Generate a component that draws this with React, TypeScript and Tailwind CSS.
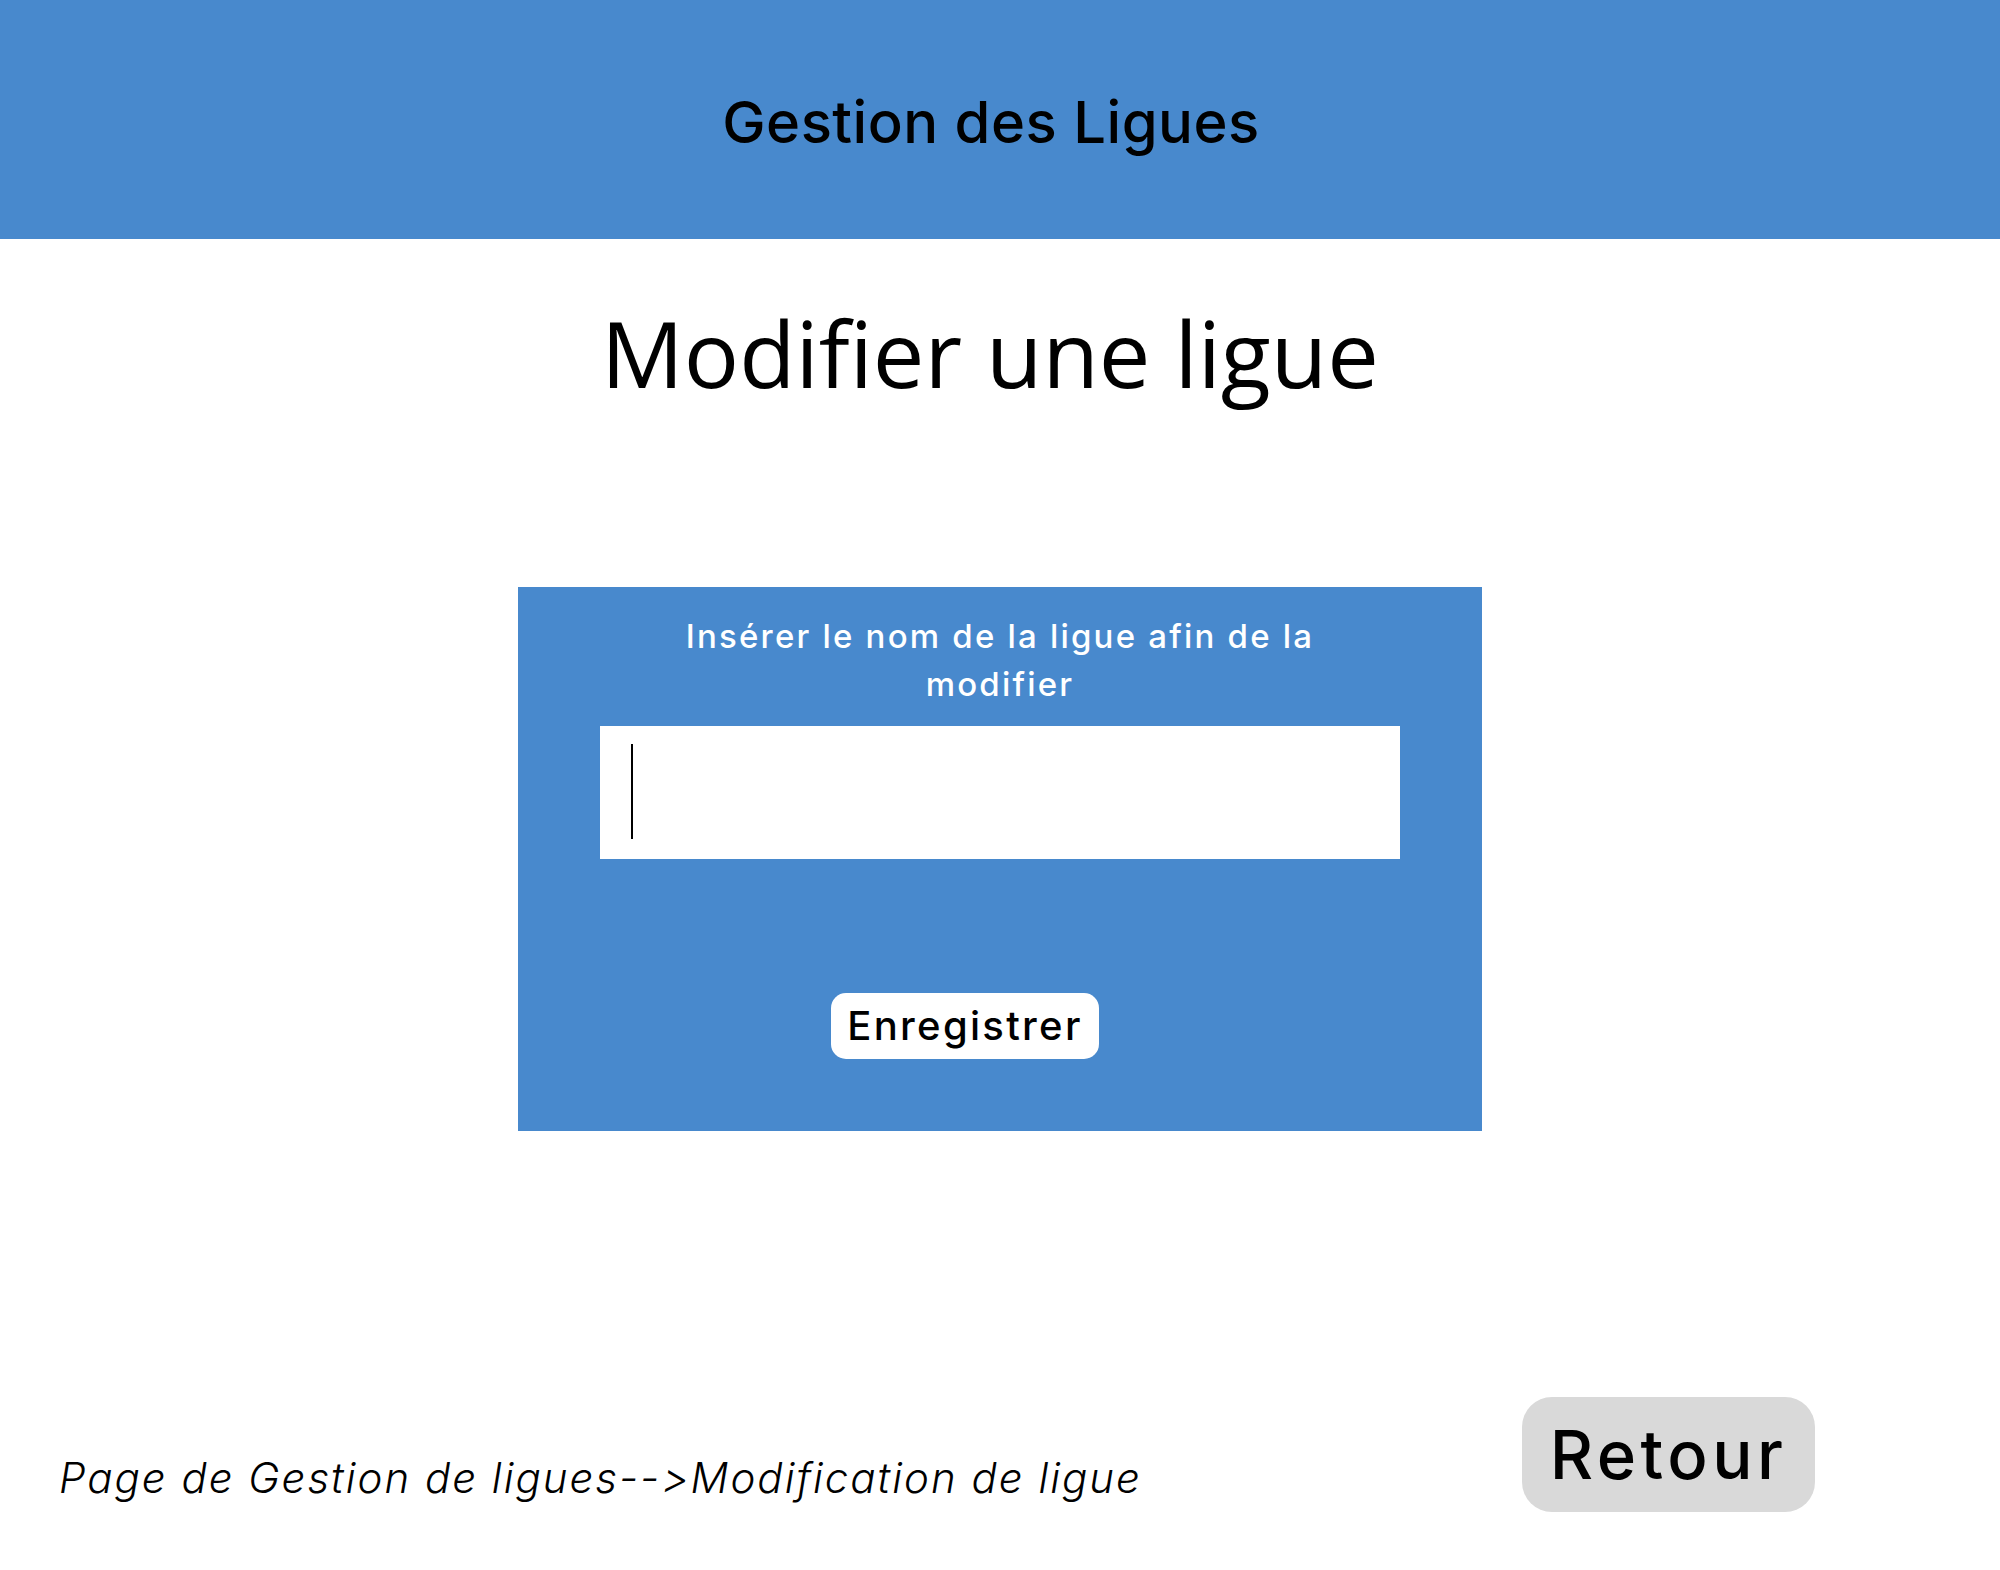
import React from 'react';

export default function App() {
  return (
    <div className="w-[2000px] h-[1570px] bg-white flex flex-col font-['Inter',sans-serif] text-black">
      <header className="h-[239px] bg-[#4889cd] flex items-center justify-center shrink-0">
        <h1 className="mt-[4px] text-[58px] leading-none font-medium tracking-[0.5px] pr-[18px]">Gestion des Ligues</h1>
      </header>

      <h2 className="mt-[68px] text-center font-['Open_Sans',sans-serif] text-[92px] leading-[92px] pr-[20px]">
        Modifier une ligue
      </h2>

      <section className="mt-[188px] mx-auto w-[964px] h-[544px] bg-[#4889cd] flex flex-col px-[82px] pt-[25px]">
        <p className="text-white text-center text-[33px] leading-[48px] font-medium tracking-[2.2px]">
          Insérer le nom de la ligue afin de la
          <br />
          modifier
        </p>
        <div className="mt-[18px] h-[133px] bg-white flex items-start pl-[31px] pt-[18px]">
          <span className="block w-[2px] h-[95px] bg-black" />
        </div>
        <div className="mt-[134px] pl-[231px]">
          <button className="w-[268px] h-[66px] bg-white rounded-[15px] text-[40px] font-medium leading-none tracking-[2.3px] flex items-center justify-center">
            Enregistrer
          </button>
        </div>
      </section>

      <footer className="mt-auto mb-[58px] flex items-start justify-between pl-[59px] pr-[185px]">
        <p className="mt-[59px] italic font-light text-[42px] leading-[43px] tracking-[2px]">
          Page de Gestion de ligues--&gt;Modification de ligue
        </p>
        <button className="w-[293px] h-[115px] bg-[#d9d9d9] rounded-[30px] text-[67px] font-medium leading-none tracking-[4.5px] flex items-center justify-center">
          Retour
        </button>
      </footer>
    </div>
  );
}
